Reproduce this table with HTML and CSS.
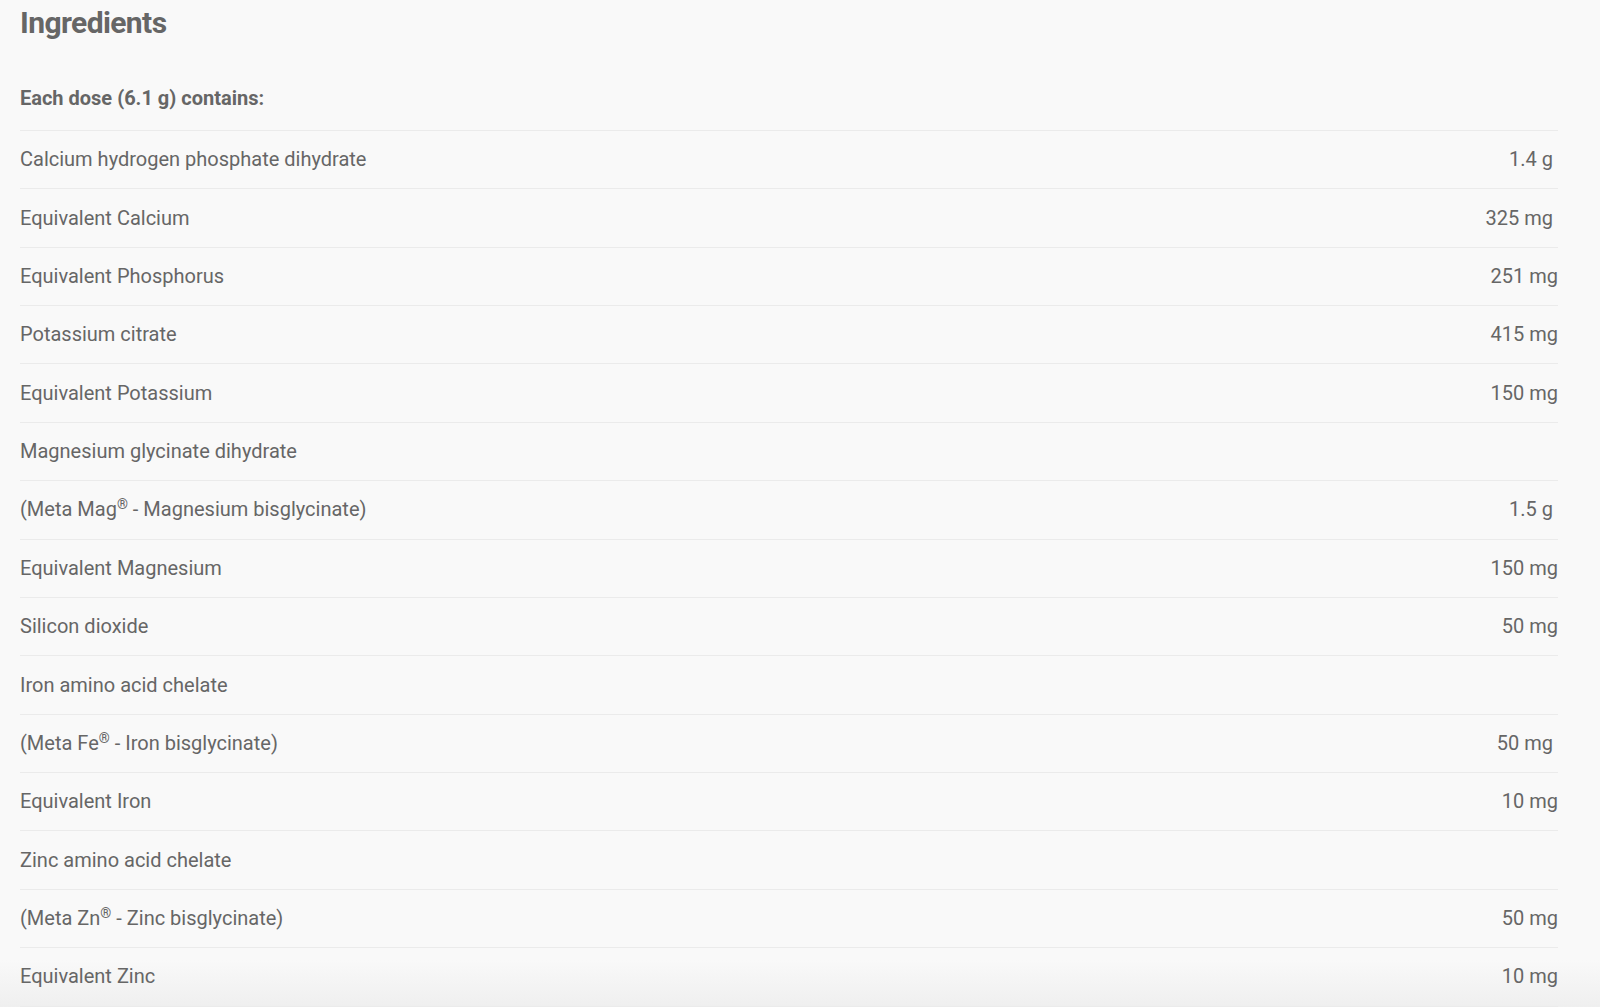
FILE: index.html
```html
<!DOCTYPE html>
<html lang="en">
<head>
<meta charset="utf-8">
<title>Ingredients</title>
<link rel="stylesheet" href="styles.css">
</head>
<body>
<div class="page">
  <h2 class="title">Ingredients</h2>
  <div class="table">
    <div class="row head"><span class="name">Each dose (6.1 g) contains:</span></div>
    <div class="row"><span class="name">Calcium hydrogen phosphate dihydrate</span><span class="val">1.4 g&nbsp;</span></div>
    <div class="row"><span class="name">Equivalent Calcium</span><span class="val">325 mg&nbsp;</span></div>
    <div class="row"><span class="name">Equivalent Phosphorus</span><span class="val">251 mg</span></div>
    <div class="row"><span class="name">Potassium citrate</span><span class="val">415 mg</span></div>
    <div class="row"><span class="name">Equivalent Potassium</span><span class="val">150 mg</span></div>
    <div class="row"><span class="name">Magnesium glycinate dihydrate</span><span class="val"></span></div>
    <div class="row"><span class="name">(Meta Mag<sup>®</sup> - Magnesium bisglycinate)</span><span class="val">1.5 g&nbsp;</span></div>
    <div class="row"><span class="name">Equivalent Magnesium</span><span class="val">150 mg</span></div>
    <div class="row"><span class="name">Silicon dioxide</span><span class="val">50 mg</span></div>
    <div class="row"><span class="name">Iron amino acid chelate</span><span class="val"></span></div>
    <div class="row"><span class="name">(Meta Fe<sup>®</sup> - Iron bisglycinate)</span><span class="val">50 mg&nbsp;</span></div>
    <div class="row"><span class="name">Equivalent Iron</span><span class="val">10 mg</span></div>
    <div class="row"><span class="name">Zinc amino acid chelate</span><span class="val"></span></div>
    <div class="row"><span class="name">(Meta Zn<sup>®</sup> - Zinc bisglycinate)</span><span class="val">50 mg</span></div>
    <div class="row"><span class="name">Equivalent Zinc</span><span class="val">10 mg</span></div>
  </div>
</div>
</body>
</html>
```
FILE: styles.css
```css
html, body {
  margin: 0;
  padding: 0;
}
html {
  background: #f9f9f9;
}
body {
  font-family: Roboto, "Liberation Sans", Arial, sans-serif;
  color: #666666;
  overflow: hidden;
  height: 1007px;
  background: linear-gradient(to bottom, rgba(249,249,249,0) 0, rgba(249,249,249,0) 960px, #efefef 1007px);
}
.page {
  padding: 0 42px 0 20px;
}
.title {
  margin: 4.8px 0 0 0;
  font-size: 30px;
  line-height: 36px;
  font-weight: 700;
  letter-spacing: -0.6px;
  color: #666666;
}
.table {
  display: flex;
  flex-direction: column;
}
.row {
  display: flex;
  justify-content: space-between;
  align-items: baseline;
  font-size: 20px;
  line-height: 24px;
  padding: 16.2px 0 17.2px 0;
  border-bottom: 1px solid #ebebeb;
}
.row.head {
  font-weight: 700;
  padding: 45px 0 20.2px 0;
}
.val {
  white-space: pre;
}
sup {
  font-size: 14px;
  font-weight: 500;
  line-height: 0;
  vertical-align: 7px;
}
```
